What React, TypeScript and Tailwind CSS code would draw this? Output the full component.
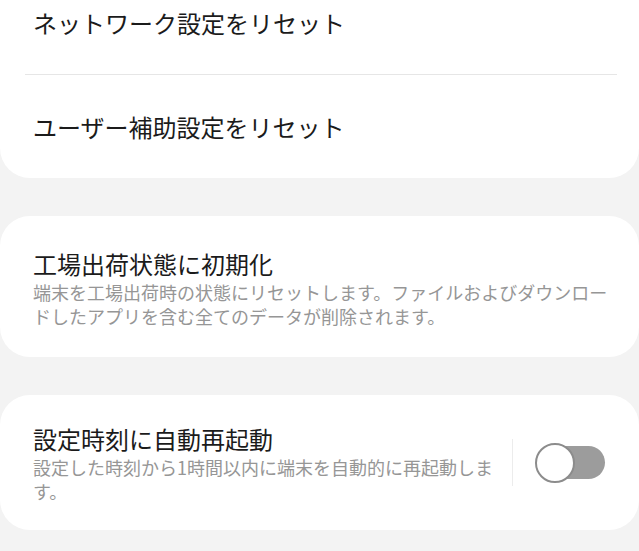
import React, { useState } from 'react'

const font = { fontFamily: '"Noto Sans CJK JP", "Noto Sans", sans-serif' }

const Toggle = ({ on, onChange }: { on: boolean; onChange: () => void }) => {
  return (
    <button
      type="button"
      onClick={onChange}
      className="relative w-[70px] h-[40px] flex items-center cursor-pointer"
    >
      <span className={`absolute left-[4px] right-0 h-[33px] rounded-full ${on ? 'bg-[#3e91ff]' : 'bg-[#9c9c9c]'}`} />
      <span
        className={`absolute top-0 w-[40px] h-[40px] rounded-full bg-white border-2 ${on ? 'left-[30px] border-[#3e91ff]' : 'left-0 border-[#8c8c8c]'}`}
      />
    </button>
  )
}

const App = () => {
  const [restart, setRestart] = useState(false)

  return (
    <div className="min-h-screen bg-[#f3f3f3] overflow-hidden" style={font}>
      <div className="mt-[-29px] flex flex-col gap-[38px]">
        {/* reset group */}
        <div className="bg-white rounded-b-[30px]">
          <div className="h-[103px] flex items-center px-[33px]">
            <span className="text-[24px] leading-[32px] text-[#1b1b1b]">ネットワーク設定をリセット</span>
          </div>
          <div className="h-px bg-[#e6e6e6] ml-[25px] mr-[22px]" />
          <div className="h-[103px] flex items-center px-[33px]">
            <span className="text-[24px] leading-[32px] text-[#1b1b1b]">ユーザー補助設定をリセット</span>
          </div>
        </div>

        {/* factory reset */}
        <div className="bg-white rounded-[30px] pt-[32px] pb-[29px] px-[33px]">
          <div className="text-[24px] leading-[32px] text-[#1b1b1b]">工場出荷状態に初期化</div>
          <div className="text-[18px] leading-[24px] text-[#969696] whitespace-nowrap">
            端末を工場出荷時の状態にリセットします。ファイルおよびダウンロー
            <br />
            ドしたアプリを含む全てのデータが削除されます。
          </div>
        </div>

        {/* auto restart */}
        <div className="bg-white rounded-[30px] h-[135px] flex items-center pl-[33px] pr-[34px]">
          <div className="flex-1">
            <div className="text-[24px] leading-[32px] text-[#1b1b1b]">設定時刻に自動再起動</div>
            <div className="text-[18px] leading-[24px] text-[#969696] whitespace-nowrap">
              設定した時刻から1時間以内に端末を自動的に再起動しま
              <br />
              す。
            </div>
          </div>
          <div className="w-px h-[47px] bg-[#ececec] mr-[22px]" />
          <Toggle on={restart} onChange={() => setRestart(!restart)} />
        </div>
      </div>
    </div>
  )
}

export default App
